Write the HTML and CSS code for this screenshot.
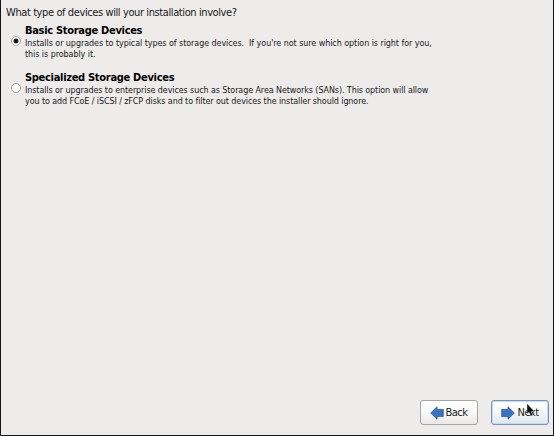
FILE: index.html
```html
<!DOCTYPE html>
<html lang="en">
<head>
    <meta charset="UTF-8" />
    <meta name="viewport" content="width=device-width, initial-scale=1.0"/>
    <title>Storage Devices</title>
    <link rel="stylesheet" href="styles.css">
</head>
<body>
<form class="installer">
    <h1 class="question">What type of devices will your installation involve?</h1>

    <label class="option">
        <input type="radio" name="storage" value="basic" checked />
        <span class="option-text">
            <span class="option-title">Basic Storage Devices</span>
            <span class="option-line">Installs or upgrades to typical types of storage devices.&nbsp; If you're not sure which option is right for you,</span>
            <span class="option-line">this is probably it.</span>
        </span>
    </label>

    <label class="option">
        <input type="radio" name="storage" value="specialized" />
        <span class="option-text">
            <span class="option-title">Specialized Storage Devices</span>
            <span class="option-line tight">Installs or upgrades to enterprise devices such as Storage Area Networks (SANs). This option will allow</span>
            <span class="option-line tight">you to add FCoE / iSCSI / zFCP disks and to filter out devices the installer should ignore.</span>
        </span>
    </label>

    <div class="buttons">
        <button type="button" class="btn">
            <svg class="arrow" width="14" height="14" viewBox="0 0 14 14">
                <path d="M.7 7 7 .8V3.4h6.3v7.2H7v2.6z" fill="#3b72b9" stroke="#2f5c9c" stroke-width=".8"/>
            </svg>
            <span>Back</span>
        </button>
        <button type="button" class="btn btn-next">
            <svg class="arrow" width="14" height="14" viewBox="0 0 14 14">
                <path d="M13.3 7 7 .8V3.4H.7v7.2H7v2.6z" fill="#3b72b9" stroke="#2f5c9c" stroke-width=".8"/>
            </svg>
            <span>Next</span>
            <svg class="cursor" width="9" height="14" viewBox="0 0 9 14">
                <path d="M1 .5v10.5l2.1-2 1.7 4 1.9-.7-1.6-3.8h3.3z" fill="#111" stroke="#ddd" stroke-width=".4"/>
            </svg>
        </button>
    </div>
</form>
</body>
</html>
```

FILE: styles.css
```css
body {
    margin: 0;
    background-color: #edecea;
    font-family: 'DejaVu Sans', sans-serif;
    color: #1a1a1a;
}

.installer {
    display: flex;
    flex-direction: column;
    height: 436px;
    padding: 6px 5px 10px;
    border: 1px solid #161616;
    border-top: none;
    box-sizing: border-box;
}

.question {
    margin: 0 0 4px;
    font-size: 11px;
    font-weight: normal;
    font-stretch: condensed;
    letter-spacing: -0.4px;
    line-height: 14px;
}

.option {
    display: flex;
    height: 47px;
    padding-left: 5px;
}

.option input {
    appearance: none;
    flex: none;
    width: 10px;
    height: 10px;
    margin: 12px 4px 0 0;
    border: 1px solid #a0a0a0;
    border-radius: 50%;
    background-color: #fff;
    box-sizing: border-box;
}

.option input:checked {
    background-image: radial-gradient(circle, #111 2px, transparent 2.8px);
}

.option-title {
    display: block;
    margin-bottom: 1px;
    color: #000;
    font-size: 11px;
    font-weight: bold;
    font-stretch: condensed;
    letter-spacing: -0.3px;
    line-height: 13px;
}

.option-line {
    display: block;
    font-size: 8px;
    letter-spacing: -0.055px;
    line-height: 11px;
    white-space: nowrap;
}

.tight {
    letter-spacing: -0.085px;
}

.buttons {
    display: flex;
    justify-content: flex-end;
    gap: 13px;
    margin-top: auto;
    margin-right: -1px;
}

.btn {
    position: relative;
    display: flex;
    align-items: center;
    justify-content: center;
    width: 58px;
    height: 25px;
    padding: 0;
    border: 1px solid #a7a5a2;
    border-radius: 3px;
    background: linear-gradient(#fff, #f9f9f8 50%, #e9e8e6);
    color: #1a1a1a;
    font-family: inherit;
    font-size: 11px;
    font-stretch: condensed;
    letter-spacing: -0.5px;
}

.btn-next {
    border-color: #7894b8;
    background: linear-gradient(#fff, #f4f7fb 50%, #dfe6ef);
    box-shadow: inset 0 0 0 1px #c9d8ea;
}

.arrow {
    margin-right: 1px;
}

.btn-next .arrow {
    margin-right: 2px;
}

/* pointer resting on the Next button */
.cursor {
    position: absolute;
    left: 34px;
    top: 2px;
}
```
